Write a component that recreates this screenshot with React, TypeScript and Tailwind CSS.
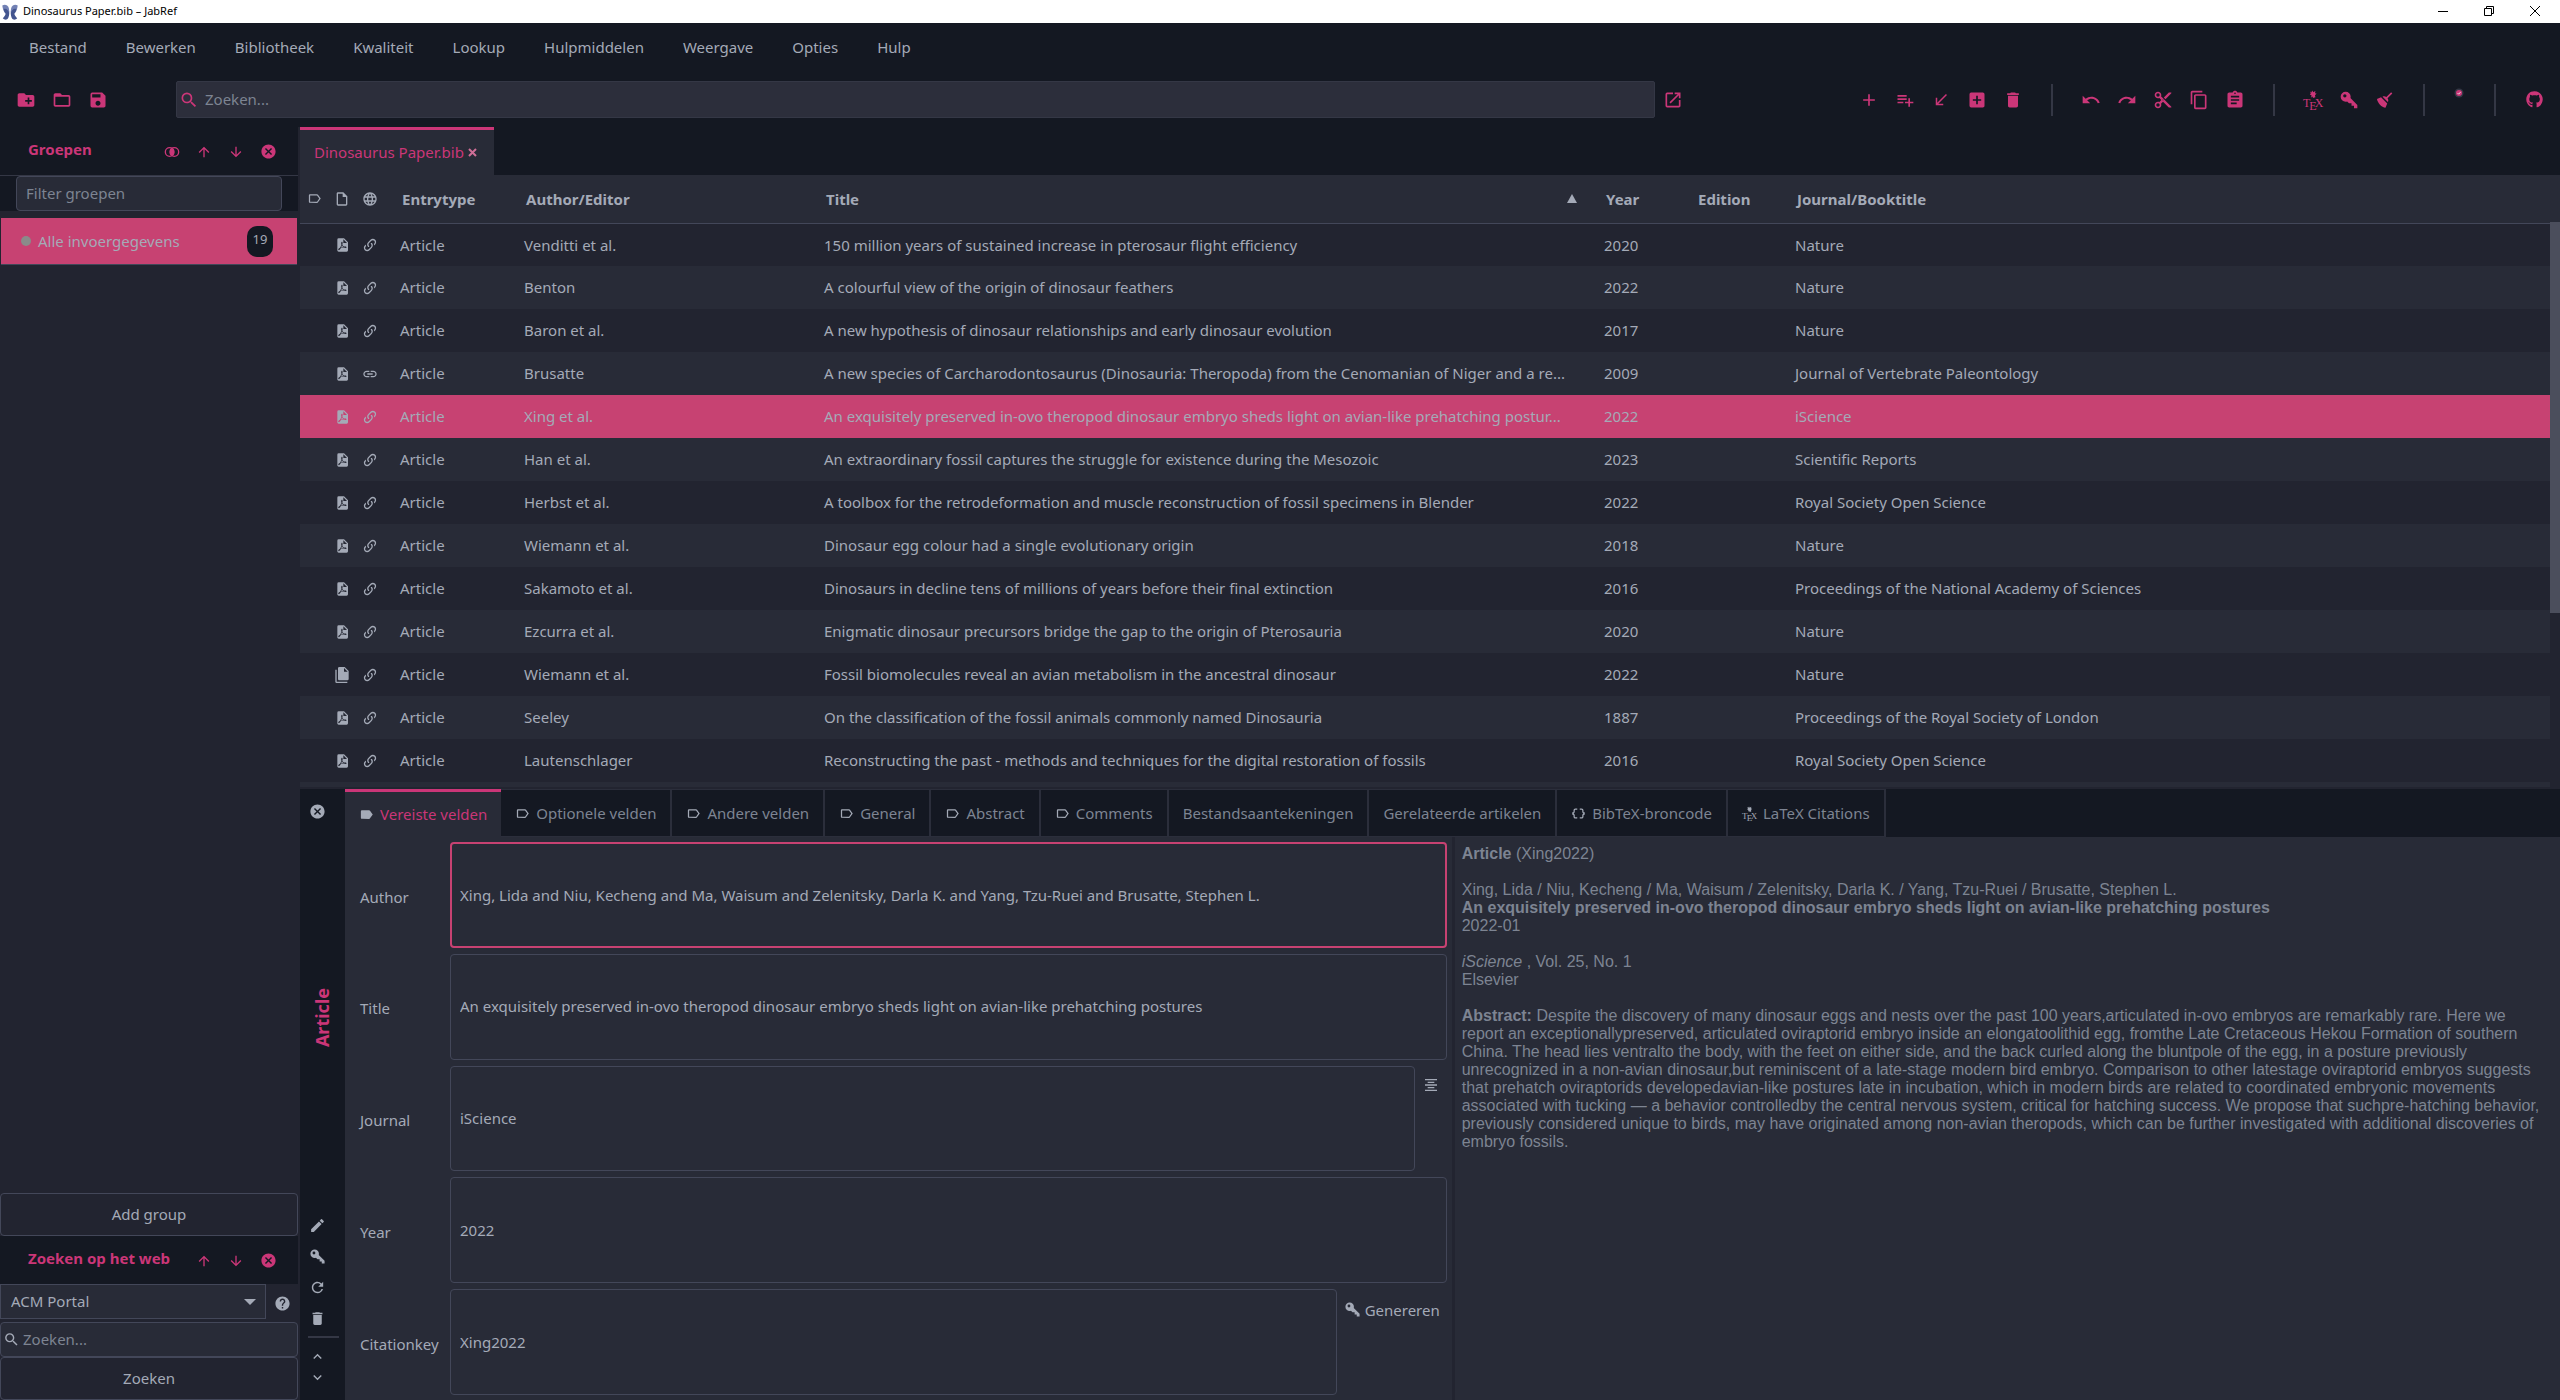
import React from "react";
import {
  MdAdd,
  MdAddBox,
  MdArrowDownward,
  MdArrowUpward,
  MdAssignment,
  MdCallReceived,
  MdCancel,
  MdContentCopy,
  MdContentCut,
  MdCreateNewFolder,
  MdDataObject,
  MdDelete,
  MdEdit,
  MdExpandLess,
  MdExpandMore,
  MdFolderOpen,
  MdFormatAlignCenter,
  MdHelp,
  MdLabel,
  MdLabelOutline,
  MdLanguage,
  MdLink,
  MdOpenInNew,
  MdOutlineInsertDriveFile,
  MdPlaylistAdd,
  MdRedo,
  MdRefresh,
  MdSave,
  MdSearch,
  MdUndo,
} from "react-icons/md";
import { FaGithub } from "react-icons/fa";

type IconProps = { size?: number; className?: string };

function PathIcon({ d, size = 20, className = "" }: IconProps & { d: string }) {
  return (
    <svg width={size} height={size} viewBox="0 0 24 24" fill="currentColor" className={className} aria-hidden="true">
      <path fillRule="evenodd" d={d} />
    </svg>
  );
}

const KeyIcon = (p: IconProps) => (
  <PathIcon
    {...p}
    d="M22,18V22H18V19H15V16H12L9.74,13.74C9.19,13.91 8.61,14 8,14A6,6 0 0,1 2,8A6,6 0 0,1 8,2A6,6 0 0,1 14,8C14,8.61 13.91,9.19 13.74,9.74L22,18M7,5A2,2 0 0,0 5,7A2,2 0 0,0 7,9A2,2 0 0,0 9,7A2,2 0 0,0 7,5Z"
  />
);

const BroomIcon = (p: IconProps) => (
  <PathIcon
    {...p}
    d="M19.36,2.72L20.78,4.14L15.06,9.85C16.13,11.39 16.28,13.24 15.38,14.44L9.06,8.12C10.26,7.22 12.11,7.37 13.65,8.44L19.36,2.72M5.93,17.57C3.92,15.56 2.69,13.16 2.35,10.92L7.23,8.83L14.67,16.27L12.58,21.15C10.34,20.81 7.94,19.58 5.93,17.57Z"
  />
);

const FilesIcon = (p: IconProps) => (
  <PathIcon
    {...p}
    d="M15,7H20.5L15,1.5V7M8,0H16L22,6V18A2,2 0 0,1 20,20H8C6.89,20 6,19.1 6,18V2A2,2 0 0,1 8,0M4,4V22H20V24H4A2,2 0 0,1 2,22V4H4Z"
  />
);

const PdfIcon = (p: IconProps) => (
  <PathIcon
    {...p}
    d="M14,9H19.5L14,3.5V9M7,2H15L21,8V20A2,2 0 0,1 19,22H7C5.89,22 5,21.1 5,20V4A2,2 0 0,1 7,2M11.93,12.44C12.34,13.34 12.86,14.08 13.46,14.59L13.87,14.91C13,15.07 11.8,15.35 10.53,15.84L10.42,15.88L10.92,14.84C11.37,13.97 11.7,13.18 11.93,12.44M18.41,16.25C18.59,16.07 18.68,15.84 18.69,15.59C18.72,15.39 18.67,15.2 18.57,15.04C18.28,14.57 17.53,14.35 16.29,14.35L15,14.42L14.13,13.84C13.5,13.32 12.93,12.41 12.53,11.28L12.57,11.14C12.9,9.81 13.21,8.2 12.55,7.54C12.39,7.38 12.17,7.3 11.94,7.3H11.7C11.33,7.3 11,7.69 10.91,8.07C10.54,9.4 10.76,10.13 11.13,11.34C10.88,12.23 10.56,13.25 10.05,14.28L9.09,16.08L8.2,16.57C7,17.32 6.43,18.16 6.32,18.69C6.28,18.88 6.3,19.05 6.37,19.23L6.4,19.28L6.88,19.59L7.32,19.7C8.13,19.7 9.05,18.75 10.29,16.63L10.47,16.56C11.5,16.23 12.78,16 14.5,15.81C15.53,16.32 16.74,16.55 17.5,16.55C17.94,16.55 18.24,16.44 18.41,16.25Z"
  />
);

const ChainIcon = (p: IconProps) => (
  <PathIcon
    {...p}
    d="M10.59,13.41C11,13.8 11,14.44 10.59,14.83C10.2,15.22 9.56,15.22 9.17,14.83C7.22,12.88 7.22,9.71 9.17,7.76L12.71,4.22C14.66,2.27 17.83,2.27 19.78,4.22C21.73,6.17 21.73,9.34 19.78,11.29L18.29,12.78C18.3,11.96 18.17,11.14 17.89,10.36L18.36,9.88C19.54,8.71 19.54,6.81 18.36,5.64C17.19,4.46 15.29,4.46 14.12,5.64L10.59,9.17C9.41,10.34 9.41,12.24 10.59,13.41M13.41,9.17C13.8,8.78 14.44,8.78 14.83,9.17C16.78,11.12 16.78,14.29 14.83,16.24L11.29,19.78C9.34,21.73 6.17,21.73 4.22,19.78C2.27,17.83 2.27,14.66 4.22,12.71L5.71,11.22C5.7,12.04 5.83,12.86 6.11,13.65L5.64,14.12C4.46,15.29 4.46,17.19 5.64,18.36C6.81,19.54 8.71,19.54 9.88,18.36L13.41,14.83C14.59,13.66 14.59,11.76 13.41,10.59C13,10.2 13,9.56 13.41,9.17Z"
  />
);

function IntersectionIcon() {
  return (
    <svg width="16" height="16" viewBox="0 0 24 24" fill="none" stroke="currentColor" strokeWidth="2" aria-hidden="true">
      <circle cx="8.500" cy="12" r="6.500" />
      <circle cx="15.500" cy="12" r="6.500" />
      <ellipse cx="12" cy="12" rx="3.200" ry="5.500" fill="currentColor" stroke="none" />
    </svg>
  );
}

function TexIcon({ size = 20 }: IconProps) {
  return (
    <svg width={size} height={size} viewBox="0 0 20 20" fill="currentColor" aria-hidden="true" className="overflow-visible">
      <path d="M7 1.200l1.200 1.200L9.400.6l.8 1.600L12.400 1l-.4 2.200 1.600.4-1.600 1.600.4 2L9.800 8l.2-1.600-1.800 1 .3-2.200L6.800 4.600l1-1z" />
      <g fontFamily="'Liberation Serif', serif" fontSize="12">
        <text x="0" y="17">T</text>
        <text x="6.200" y="19.500">E</text>
        <text x="11.800" y="17">X</text>
      </g>
    </svg>
  );
}

function JabRefLogo() {
  return (
    <svg width="16" height="16" viewBox="0 0 16 16" aria-hidden="true">
      <g fill="#7281b4">
        <path d="M.3 1.500C3 0 5.500.8 6.800 4L7.500 8.500 5.500 9.500C3 9.500 1 7.500.3 1.500z" />
        <path d="M15.700 1.500C13 0 10.500.8 9.200 4L8.500 8.500 10.500 9.500C13 9.500 15 7.500 15.700 1.500z" />
      </g>
      <g fill="#43558f">
        <path d="M1.800 5C4 4 6.500 6 7.300 9.500 7 13 6 15 4.500 15.600 3 15.800 1.500 15.300.8 14.300 2.500 12.500 3.500 11 3.600 9.800 2.500 8.500 2 7 1.800 5z" />
        <path d="M14.200 5C12 4 9.500 6 8.700 9.500 9 13 10 15 11.500 15.600 13 15.800 14.500 15.300 15.200 14.300 13.500 12.500 12.500 11 12.400 9.800 13.500 8.500 14 7 14.200 5z" />
      </g>
    </svg>
  );
}

const menus = ["Bestand", "Bewerken", "Bibliotheek", "Kwaliteit", "Lookup", "Hulpmiddelen", "Weergave", "Opties", "Hulp"];

type Entry = { author: string; title: string; year: string; journal: string; files?: boolean; url?: boolean; selected?: boolean };

const entries: Entry[] = [
  { author: "Venditti et al.", title: "150 million years of sustained increase in pterosaur flight efficiency", year: "2020", journal: "Nature" },
  { author: "Benton", title: "A colourful view of the origin of dinosaur feathers", year: "2022", journal: "Nature" },
  { author: "Baron et al.", title: "A new hypothesis of dinosaur relationships and early dinosaur evolution", year: "2017", journal: "Nature" },
  { author: "Brusatte", title: "A new species of Carcharodontosaurus (Dinosauria: Theropoda) from the Cenomanian of Niger and a re...", year: "2009", journal: "Journal of Vertebrate Paleontology", url: true },
  { author: "Xing et al.", title: "An exquisitely preserved in-ovo theropod dinosaur embryo sheds light on avian-like prehatching postur...", year: "2022", journal: "iScience", selected: true },
  { author: "Han et al.", title: "An extraordinary fossil captures the struggle for existence during the Mesozoic", year: "2023", journal: "Scientific Reports" },
  { author: "Herbst et al.", title: "A toolbox for the retrodeformation and muscle reconstruction of fossil specimens in Blender", year: "2022", journal: "Royal Society Open Science" },
  { author: "Wiemann et al.", title: "Dinosaur egg colour had a single evolutionary origin", year: "2018", journal: "Nature" },
  { author: "Sakamoto et al.", title: "Dinosaurs in decline tens of millions of years before their final extinction", year: "2016", journal: "Proceedings of the National Academy of Sciences" },
  { author: "Ezcurra et al.", title: "Enigmatic dinosaur precursors bridge the gap to the origin of Pterosauria", year: "2020", journal: "Nature" },
  { author: "Wiemann et al.", title: "Fossil biomolecules reveal an avian metabolism in the ancestral dinosaur", year: "2022", journal: "Nature", files: true },
  { author: "Seeley", title: "On the classification of the fossil animals commonly named Dinosauria", year: "1887", journal: "Proceedings of the Royal Society of London" },
  { author: "Lautenschlager", title: "Reconstructing the past - methods and techniques for the digital restoration of fossils", year: "2016", journal: "Royal Society Open Science" },
];

function ToolButton({ label, children }: { label: string; children: React.ReactNode }) {
  return (
    <button type="button" aria-label={label} className="flex h-9 w-9 shrink-0 items-center justify-center text-[#cb3678]">
      {children}
    </button>
  );
}

function ToolSeparator() {
  return (
    <div className="flex w-[42px] shrink-0 justify-center">
      <div className="h-8 w-0.5 bg-[#343745]" />
    </div>
  );
}

function PaneButton({ label, children }: { label: string; children: React.ReactNode }) {
  return (
    <button type="button" aria-label={label} className="flex h-8 w-8 items-center justify-center">
      {children}
    </button>
  );
}

function TitleBar() {
  return (
    <header className="flex h-[23px] items-center bg-white text-[11px] text-black">
      <div className="flex flex-1 items-center gap-[5px] pl-0.5">
        <JabRefLogo />
        <h1>Dinosaurus Paper.bib – JabRef</h1>
      </div>
      <div className="flex pr-0.5 pb-0.5">
        <button type="button" aria-label="Minimaliseren" className="flex w-[46px] items-center justify-center">
          <svg width="10" height="10" stroke="currentColor"><path d="M0 5.500h10" /></svg>
        </button>
        <button type="button" aria-label="Herstellen" className="flex w-[46px] items-center justify-center">
          <svg width="10" height="10" fill="none" stroke="currentColor"><path d="M.5 2.500h7v7h-7zM2.500 2.500v-2h7v7h-2" /></svg>
        </button>
        <button type="button" aria-label="Sluiten" className="flex w-[46px] items-center justify-center">
          <svg width="10" height="10" stroke="currentColor"><path d="M0 0l10 10M10 0L0 10" /></svg>
        </button>
      </div>
    </header>
  );
}

function Toolbar() {
  return (
    <div className="flex h-[54px] items-center bg-[#141822] px-2 pb-px">
      <div className="mr-[60px] flex">
        <ToolButton label="Nieuwe bibliotheek"><MdCreateNewFolder size={20} /></ToolButton>
        <ToolButton label="Bibliotheek openen"><MdFolderOpen size={20} /></ToolButton>
        <ToolButton label="Bibliotheek opslaan"><MdSave size={20} /></ToolButton>
      </div>
      <label className="flex h-[37px] min-w-0 flex-1 items-center rounded-xs border border-[#343745] bg-[#2c2e3b] pl-0.5">
        <MdSearch size={20} className="shrink-0 text-[#cb3678]" />
        <input aria-label="Zoeken" placeholder="Zoeken..." className="w-full bg-transparent pl-1.5 outline-none placeholder:text-[#7d8492]" />
      </label>
      <ToolButton label="Zoekresultaten in venster openen"><MdOpenInNew size={20} /></ToolButton>
      <div className="ml-40 flex items-center">
        <ToolButton label="Nieuw artikel"><MdAdd size={20} /></ToolButton>
        <ToolButton label="Nieuwe invoer"><MdPlaylistAdd size={20} /></ToolButton>
        <ToolButton label="Invoer uit platte tekst"><MdCallReceived size={18} /></ToolButton>
        <ToolButton label="Invoer toevoegen"><MdAddBox size={20} /></ToolButton>
        <ToolButton label="Verwijderen"><MdDelete size={20} /></ToolButton>
        <ToolSeparator />
        <ToolButton label="Ongedaan maken"><MdUndo size={20} /></ToolButton>
        <ToolButton label="Opnieuw"><MdRedo size={20} /></ToolButton>
        <ToolButton label="Knippen"><MdContentCut size={20} /></ToolButton>
        <ToolButton label="Kopiëren"><MdContentCopy size={20} /></ToolButton>
        <ToolButton label="Plakken"><MdAssignment size={20} /></ToolButton>
        <ToolSeparator />
        <ToolButton label="Naar LaTeX sturen"><TexIcon /></ToolButton>
        <ToolButton label="Citatiesleutels genereren"><KeyIcon size={20} /></ToolButton>
        <ToolButton label="Opschonen"><BroomIcon size={20} /></ToolButton>
        <ToolSeparator />
        <button type="button" aria-label="Achtergrondtaken" className="flex h-8 w-[29px] justify-center pt-1 pr-0.5">
          <svg width="10" height="10" viewBox="0 0 10 10" fill="none">
            <circle cx="5" cy="5" r="4.500" fill="#343745" />
            <circle cx="5" cy="5" r="3" fill="#cb3678" />
            <path d="M3.500 5l1.200 1.200L6.700 3.900" stroke="#e8d5df" />
          </svg>
        </button>
        <ToolSeparator />
        <ToolButton label="GitHub"><FaGithub size={17} /></ToolButton>
      </div>
    </div>
  );
}

function PaneHeader({ title, children }: { title: string; children: React.ReactNode }) {
  return (
    <div className="flex h-12 items-center justify-between bg-[#141822] pr-3.5 pl-7 text-[#cb3678]">
      <h2 className="pb-[3px] font-bold">{title}</h2>
      <div className="flex pt-px">{children}</div>
    </div>
  );
}

function Sidebar() {
  return (
    <aside className="flex w-[298px] shrink-0 flex-col">
      <PaneHeader title="Groepen">
        <PaneButton label="Doorsnede"><IntersectionIcon /></PaneButton>
        <PaneButton label="Omhoog"><MdArrowUpward size={16} /></PaneButton>
        <PaneButton label="Omlaag"><MdArrowDownward size={16} /></PaneButton>
        <PaneButton label="Sluiten"><MdCancel size={17} /></PaneButton>
      </PaneHeader>
      <div className="border-t border-[#343745] bg-[#141822] px-4">
        <input
          aria-label="Filter groepen"
          placeholder="Filter groepen"
          className="block h-[35px] w-full rounded-sm border border-[#434759] bg-[#282b37] px-[9px] pb-0.5 outline-none placeholder:text-[#7d8492]"
        />
      </div>
      <button type="button" className="mx-px mt-[7px] flex h-[47px] items-center border-b border-[#434759] bg-[#c74272] pr-6 pl-5 text-left">
        <span className="mr-[7px] size-2.5 rounded-full bg-[#8a8a8a]" />
        <span className="flex-1">Alle invoergegevens</span>
        <span className="flex h-[31px] w-[26px] items-center justify-center rounded-[10px] bg-[#141822] pb-0.5 text-[13px]">19</span>
      </button>
      <div className="flex-1" />
      <button type="button" className="h-[43px] rounded-sm border border-[#434759]">Add group</button>
      <PaneHeader title="Zoeken op het web">
        <PaneButton label="Omhoog"><MdArrowUpward size={16} /></PaneButton>
        <PaneButton label="Omlaag"><MdArrowDownward size={16} /></PaneButton>
        <PaneButton label="Sluiten"><MdCancel size={17} /></PaneButton>
      </PaneHeader>
      <div className="mb-[3px] flex h-[35px] items-center">
        <div className="relative h-full flex-1">
          <select aria-label="Zoekdienst" className="h-full w-full appearance-none border border-[#434759] bg-[#282b37] px-2.5 outline-none">
            <option>ACM Portal</option>
          </select>
          <svg width="12" height="6" fill="currentColor" className="pointer-events-none absolute top-[15px] right-[10px]" aria-hidden="true">
            <path d="M0 0h12L6 6z" />
          </svg>
        </div>
        <button type="button" aria-label="Help" className="flex w-8 justify-center pt-1"><MdHelp size={17} /></button>
      </div>
      <label className="flex h-[35px] items-center rounded-sm border border-[#434759] bg-[#282b37] pl-0.5">
        <MdSearch size={17} className="shrink-0" />
        <input aria-label="Zoeken op het web" placeholder="Zoeken..." className="w-full bg-transparent pl-[3px] outline-none placeholder:text-[#7d8492]" />
      </label>
      <button type="button" className="h-[43px] rounded-sm border border-[#434759]">Zoeken</button>
    </aside>
  );
}

function EntryTable() {
  return (
    <section className="flex bg-[#282b37]">
      <div className="min-w-0 flex-1">
        <table className="w-full table-fixed border-collapse text-left whitespace-nowrap">
          <colgroup>
            <col className="w-7" />
            <col className="w-7" />
            <col className="w-7" />
            <col className="w-[124px]" />
            <col className="w-[300px]" />
            <col className="w-[780px]" />
            <col className="w-[92px]" />
            <col className="w-[99px]" />
            <col />
          </colgroup>
          <thead>
            <tr className="h-12 border-b border-[#434759]">
              <th aria-label="Groepen"><MdLabelOutline size={15} className="mx-auto" /></th>
              <th aria-label="Bestanden"><MdOutlineInsertDriveFile size={16} className="mx-auto" /></th>
              <th aria-label="Links"><MdLanguage size={16} className="mx-auto" /></th>
              <th className="pl-[18px]">Entrytype</th>
              <th className="pl-[18px]">Author/Editor</th>
              <th className="pl-[18px]">
                <div className="flex items-center justify-between pr-[11px]">
                  Title
                  <svg width="10" height="9" fill="currentColor" aria-hidden="true"><path d="M5 0l5 9H0z" /></svg>
                </div>
              </th>
              <th className="pl-[18px]">Year</th>
              <th className="pl-[18px]">Edition</th>
              <th className="pl-[18px]">Journal/Booktitle</th>
            </tr>
          </thead>
          <tbody>
            {entries.map((e, i) => (
              <tr key={i} className={e.selected ? "h-[43px] bg-[#c74272]" : i % 2 ? "h-[43px] bg-[#282b37]" : "h-[43px] bg-[#222430]"}>
                <td />
                <td>{e.files ? <FilesIcon size={16} className="mx-auto" /> : <PdfIcon size={16} className="mx-auto" />}</td>
                <td>{e.url ? <MdLink size={16} className="mx-auto" /> : <ChainIcon size={16} className="mx-auto" />}</td>
                <td className="pl-4">Article</td>
                <td className="pl-4">{e.author}</td>
                <td className="pl-4">{e.title}</td>
                <td className="pl-4">{e.year}</td>
                <td />
                <td className="pl-4">{e.journal}</td>
              </tr>
            ))}
          </tbody>
        </table>
        <div className="h-[5px]" />
      </div>
      <div className="flex w-2.5 flex-col pt-[47px]">
        <div className="h-[391px] bg-[#4b4e5c]" />
        <div className="flex-1 bg-[#222430]" />
      </div>
    </section>
  );
}

function FieldRow({ id, label, value, focused, children }: { id: string; label: string; value: string; focused?: boolean; children?: React.ReactNode }) {
  return (
    <div className="flex min-h-0 flex-1">
      <label htmlFor={id} className="flex w-[90px] shrink-0 items-center pt-1">{label}</label>
      <input
        id={id}
        defaultValue={value}
        className={
          focused
            ? "min-w-0 flex-1 rounded-sm border-2 border-[#c74272] bg-transparent px-2 outline-none"
            : "min-w-0 flex-1 rounded-sm border border-[#434759] bg-transparent px-[9px] outline-none"
        }
      />
      {children}
    </div>
  );
}

const editorTabs: { label: string; icon?: React.ReactNode }[] = [
  { label: "Optionele velden", icon: <MdLabelOutline size={15} /> },
  { label: "Andere velden", icon: <MdLabelOutline size={15} /> },
  { label: "General", icon: <MdLabelOutline size={15} /> },
  { label: "Abstract", icon: <MdLabelOutline size={15} /> },
  { label: "Comments", icon: <MdLabelOutline size={15} /> },
  { label: "Bestandsaantekeningen" },
  { label: "Gerelateerde artikelen" },
  { label: "BibTeX-broncode", icon: <MdDataObject size={15} /> },
  { label: "LaTeX Citations", icon: <TexIcon size={15} /> },
];

function EntryEditor() {
  return (
    <section className="mt-0.5 flex min-h-0 flex-1">
      <div className="flex w-[45px] shrink-0 flex-col bg-[#141822] pr-[11px]">
        <button type="button" aria-label="Editor sluiten" className="flex h-11 items-center justify-center"><MdCancel size={17} /></button>
        <div className="flex flex-1 items-center justify-center pb-1.5 pl-2.5">
          <h2 className="rotate-180 text-[18px] font-bold text-[#cb3678] [writing-mode:vertical-rl]">Article</h2>
        </div>
        <div className="flex flex-col items-center">
          <button type="button" aria-label="Type wijzigen" className="flex h-8 items-center"><MdEdit size={17} /></button>
          <button type="button" aria-label="Sleutel genereren" className="flex h-[31px] items-center"><KeyIcon size={17} /></button>
          <button type="button" aria-label="Vernieuwen" className="flex h-[31px] items-center"><MdRefresh size={17} /></button>
          <button type="button" aria-label="Invoer verwijderen" className="flex h-[31px] items-center"><MdDelete size={17} /></button>
          <div className="mt-0.5 mb-2 ml-3 h-0.5 w-[31px] bg-[#343745]" />
          <button type="button" aria-label="Vorige invoer" className="flex h-[21px] items-center"><MdExpandLess size={17} /></button>
          <button type="button" aria-label="Volgende invoer" className="mb-3 flex h-[21px] items-center"><MdExpandMore size={17} /></button>
        </div>
      </div>

      <div className="flex min-w-0 flex-1 flex-col">
        <div role="tablist" className="flex h-12 shrink-0 bg-[#141822]">
          <button type="button" role="tab" aria-selected="true" className="flex items-center gap-1.5 border-t-[3px] border-[#cb3678] bg-[#282b37] px-3.5 whitespace-nowrap text-[#cb3678]">
            <MdLabel size={15} className="text-[#a4aab7]" />
            Vereiste velden
          </button>
          {editorTabs.map((t) => (
            <button
              key={t.label}
              type="button"
              role="tab"
              aria-selected="false"
              className="flex items-center gap-1.5 border-t border-r-2 border-b border-[#2b2e3b] px-3.5 whitespace-nowrap text-[#7d8492]"
            >
              {t.icon && <span className="text-[#a4aab7]">{t.icon}</span>}
              {t.label}
            </button>
          ))}
        </div>

        <div className="grid min-h-0 flex-1 grid-cols-[501fr_499fr] bg-[#282b37]">
          <form className="flex flex-col gap-1.5 border-r-[3px] border-[#222430] pt-[5px] pr-[5px] pb-[5px] pl-[15px]">
            <FieldRow id="author" label="Author" focused value="Xing, Lida and Niu, Kecheng and Ma, Waisum and Zelenitsky, Darla K. and Yang, Tzu-Ruei and Brusatte, Stephen L." />
            <FieldRow id="title" label="Title" value="An exquisitely preserved in-ovo theropod dinosaur embryo sheds light on avian-like prehatching postures" />
            <FieldRow id="journal" label="Journal" value="iScience">
              <button type="button" aria-label="Afkorting wisselen" className="flex w-8 items-start justify-center pt-[11px]">
                <MdFormatAlignCenter size={16} />
              </button>
            </FieldRow>
            <FieldRow id="year" label="Year" value="2022" />
            <FieldRow id="citationkey" label="Citationkey" value="Xing2022">
              <button type="button" className="flex w-[110px] items-start justify-center gap-1 pt-2.5">
                <KeyIcon size={17} className="mt-0.5" />
                Genereren
              </button>
            </FieldRow>
          </form>

          <article className="pt-2 pr-4 pl-[7px] font-['Liberation_Sans',sans-serif] text-[16px] leading-[18px] text-[#7d8492]">
            <p><b>Article</b> (Xing2022)</p>
            <p className="mt-[18px]">Xing, Lida / Niu, Kecheng / Ma, Waisum / Zelenitsky, Darla K. / Yang, Tzu-Ruei / Brusatte, Stephen L.</p>
            <p className="font-bold">An exquisitely preserved in-ovo theropod dinosaur embryo sheds light on avian-like prehatching postures</p>
            <p>2022-01</p>
            <p className="mt-[18px]"><i>iScience</i> , Vol. 25, No. 1</p>
            <p>Elsevier</p>
            <p className="mt-[18px]">
              <b>Abstract:</b> Despite the discovery of many dinosaur eggs and nests over the past 100 years,articulated in-ovo embryos are remarkably rare. Here we report an exceptionallypreserved, articulated oviraptorid embryo inside an elongatoolithid egg, fromthe Late Cretaceous Hekou Formation of southern China. The head lies ventralto the body, with the feet on either side, and the back curled along the bluntpole of the egg, in a posture previously unrecognized in a non-avian dinosaur,but reminiscent of a late-stage modern bird embryo. Comparison to other latestage oviraptorid embryos suggests that prehatch oviraptorids developedavian-like postures late in incubation, which in modern birds are related to coordinated embryonic movements associated with tucking — a behavior controlledby the central nervous system, critical for hatching success. We propose that suchpre-hatching behavior, previously considered unique to birds, may have originated among non-avian theropods, which can be further investigated with additional discoveries of embryo fossils.
            </p>
          </article>
        </div>
      </div>
    </section>
  );
}

export default function App() {
  return (
    <div className="flex h-screen flex-col overflow-hidden bg-[#222430] font-['Noto_Sans','Open_Sans',sans-serif] text-[15px] text-[#a4aab7]">
      <TitleBar />
      <nav className="flex h-[50px] items-center gap-px bg-[#141822] px-2.5 pb-px">
        {menus.map((m) => (
          <button key={m} type="button" className="px-[19px]">{m}</button>
        ))}
      </nav>
      <Toolbar />
      <div className="flex min-h-0 flex-1 gap-0.5">
        <Sidebar />
        <main className="flex min-w-0 flex-1 flex-col">
          <div className="flex h-12 shrink-0 bg-[#141822]">
            <div className="flex items-center gap-1 border-t-[3px] border-[#cb3678] bg-[#282b37] pr-[17px] pl-3.5 text-[#cb3678]">
              <span>Dinosaurus Paper.bib</span>
              <button type="button" aria-label="Tabblad sluiten">
                <svg width="9" height="9" viewBox="0 0 9 9" stroke="#cf6f97" strokeWidth="2" aria-hidden="true"><path d="M1 1l7 7M8 1L1 8" /></svg>
              </button>
            </div>
          </div>
          <EntryTable />
          <EntryEditor />
        </main>
      </div>
    </div>
  );
}
